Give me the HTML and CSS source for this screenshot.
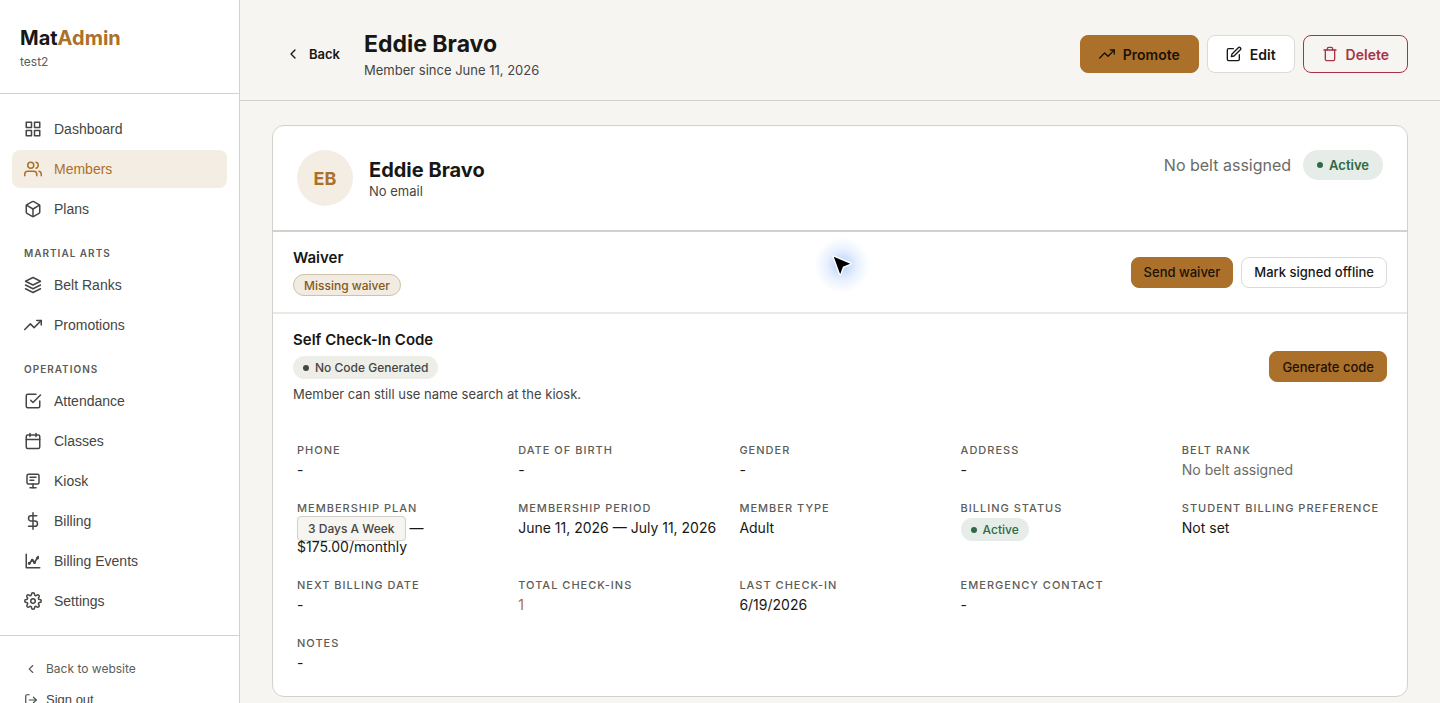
FILE: index.html
```html
<!DOCTYPE html>
<html lang="en">
<head>
    <meta charset="UTF-8">
    <meta name="viewport" content="width=device-width, initial-scale=1.0">
    <title>MatAdmin - Eddie Bravo</title>
    <link rel="stylesheet" href="styles.css">
</head>
<body>
    <div class="layout">
        <!-- Sidebar -->
        <aside class="sidebar">
            <div class="brand">
                <div class="brand-name">Mat<span>Admin</span></div>
                <div class="brand-gym">test2</div>
            </div>

            <nav class="nav">
                <a href="#" class="nav-item">
                    <svg class="icon" viewBox="0 0 24 24"><rect x="3" y="3" width="7" height="7"/><rect x="14" y="3" width="7" height="7"/><rect x="14" y="14" width="7" height="7"/><rect x="3" y="14" width="7" height="7"/></svg>
                    Dashboard
                </a>
                <a href="#" class="nav-item active">
                    <svg class="icon" viewBox="0 0 24 24"><path d="M17 21v-2a4 4 0 0 0-4-4H5a4 4 0 0 0-4 4v2"/><circle cx="9" cy="7" r="4"/><path d="M23 21v-2a4 4 0 0 0-3-3.87"/><path d="M16 3.13a4 4 0 0 1 0 7.75"/></svg>
                    Members
                </a>
                <a href="#" class="nav-item">
                    <svg class="icon" viewBox="0 0 24 24"><path d="M21 16V8a2 2 0 0 0-1-1.73l-7-4a2 2 0 0 0-2 0l-7 4A2 2 0 0 0 3 8v8a2 2 0 0 0 1 1.73l7 4a2 2 0 0 0 2 0l7-4A2 2 0 0 0 21 16z"/><path d="M3.27 6.96L12 12.01l8.73-5.05"/><path d="M12 22.08V12"/></svg>
                    Plans
                </a>

                <div class="nav-label">Martial Arts</div>
                <a href="#" class="nav-item">
                    <svg class="icon" viewBox="0 0 24 24"><path d="M12 2L2 7l10 5 10-5-10-5z"/><path d="M2 17l10 5 10-5"/><path d="M2 12l10 5 10-5"/></svg>
                    Belt Ranks
                </a>
                <a href="#" class="nav-item">
                    <svg class="icon" viewBox="0 0 24 24"><path d="M23 6l-9.5 9.5-5-5L1 18"/><path d="M17 6h6v6"/></svg>
                    Promotions
                </a>

                <div class="nav-label">Operations</div>
                <a href="#" class="nav-item">
                    <svg class="icon" viewBox="0 0 24 24"><path d="M9 11l3 3L22 4"/><path d="M21 12v7a2 2 0 0 1-2 2H5a2 2 0 0 1-2-2V5a2 2 0 0 1 2-2h11"/></svg>
                    Attendance
                </a>
                <a href="#" class="nav-item">
                    <svg class="icon" viewBox="0 0 24 24"><rect x="3" y="4" width="18" height="18" rx="2"/><path d="M16 2v4"/><path d="M8 2v4"/><path d="M3 10h18"/></svg>
                    Classes
                </a>
                <a href="#" class="nav-item">
                    <svg class="icon" viewBox="0 0 24 24"><rect x="4" y="3" width="16" height="13" rx="2"/><path d="M8 7h8"/><path d="M8 11h5"/><path d="M12 16v5"/><path d="M8 21h8"/></svg>
                    Kiosk
                </a>
                <a href="#" class="nav-item">
                    <svg class="icon" viewBox="0 0 24 24"><path d="M12 1v22"/><path d="M17 5H9.5a3.5 3.5 0 0 0 0 7h5a3.5 3.5 0 0 1 0 7H6"/></svg>
                    Billing
                </a>
                <a href="#" class="nav-item">
                    <svg class="icon" viewBox="0 0 24 24"><path d="M3 3v18h18"/><path d="M7 16l4-6 3 4 5-8"/><circle cx="7" cy="15" r="1"/><circle cx="11" cy="11" r="1"/><circle cx="14" cy="14" r="1"/><circle cx="18" cy="8" r="1"/></svg>
                    Billing Events
                </a>
                <a href="#" class="nav-item">
                    <svg class="icon" viewBox="0 0 24 24"><circle cx="12" cy="12" r="3"/><path d="M19.4 15a1.65 1.65 0 0 0 .33 1.82l.06.06a2 2 0 1 1-2.83 2.83l-.06-.06a1.65 1.65 0 0 0-2.8 1.18V21a2 2 0 0 1-4 0v-.09a1.65 1.65 0 0 0-2.9-1.18l-.06.06a2 2 0 1 1-2.83-2.83l.06-.06A1.65 1.65 0 0 0 3.09 14H3a2 2 0 0 1 0-4h.09a1.65 1.65 0 0 0 1.18-2.9l-.06-.06a2 2 0 1 1 2.83-2.83l.06.06A1.65 1.65 0 0 0 10 3.09V3a2 2 0 0 1 4 0v.09a1.65 1.65 0 0 0 2.9 1.18l.06-.06a2 2 0 1 1 2.83 2.83l-.06.06A1.65 1.65 0 0 0 20.91 10H21a2 2 0 0 1 0 4h-.09a1.65 1.65 0 0 0-1.51 1z"/></svg>
                    Settings
                </a>
            </nav>

            <div class="sidebar-footer">
                <a href="#" class="footer-link">
                    <svg class="icon icon-sm" viewBox="0 0 24 24"><path d="M15 18l-6-6 6-6"/></svg>
                    Back to website
                </a>
                <button type="button" class="footer-link sign-out">
                    <svg class="icon icon-sm" viewBox="0 0 24 24"><path d="M9 21H5a2 2 0 0 1-2-2V5a2 2 0 0 1 2-2h4"/><path d="M16 17l5-5-5-5"/><path d="M21 12H9"/></svg>
                    Sign out
                </button>
            </div>
        </aside>

        <!-- Main -->
        <main class="main">
            <header class="topbar">
                <a href="#" class="back-link">
                    <svg class="icon icon-md" viewBox="0 0 24 24"><path d="M15 18l-6-6 6-6"/></svg>
                    Back
                </a>
                <div class="page-title">
                    <h1>Eddie Bravo</h1>
                    <p>Member since June 11, 2026</p>
                </div>
                <div class="actions">
                    <button type="button" class="btn btn-primary">
                        <svg class="icon icon-md" viewBox="0 0 24 24"><path d="M23 6l-9.5 9.5-5-5L1 18"/><path d="M17 6h6v6"/></svg>
                        Promote
                    </button>
                    <button type="button" class="btn">
                        <svg class="icon icon-md" viewBox="0 0 24 24"><path d="M11 4H4a2 2 0 0 0-2 2v14a2 2 0 0 0 2 2h14a2 2 0 0 0 2-2v-7"/><path d="M18.5 2.5a2.12 2.12 0 0 1 3 3L12 15l-4 1 1-4 9.5-9.5z"/></svg>
                        Edit
                    </button>
                    <button type="button" class="btn btn-danger">
                        <svg class="icon icon-md" viewBox="0 0 24 24"><path d="M3 6h18"/><path d="M19 6v14a2 2 0 0 1-2 2H7a2 2 0 0 1-2-2V6m3 0V4a2 2 0 0 1 2-2h4a2 2 0 0 1 2 2v2"/></svg>
                        Delete
                    </button>
                </div>
            </header>

            <div class="content">
                <section class="card">
                    <div class="profile">
                        <div class="avatar">EB</div>
                        <div class="profile-info">
                            <h2>Eddie Bravo</h2>
                            <p>No email</p>
                        </div>
                        <div class="profile-status">
                            <span class="no-belt">No belt assigned</span>
                            <span class="badge badge-lg badge-green"><i class="dot"></i>Active</span>
                        </div>
                    </div>

                    <div class="panel panel-line">
                        <div>
                            <h3>Waiver</h3>
                            <span class="badge badge-warning">Missing waiver</span>
                        </div>
                        <div class="panel-actions">
                            <button type="button" class="btn btn-sm btn-primary">Send waiver</button>
                            <button type="button" class="btn btn-sm">Mark signed offline</button>
                        </div>
                    </div>

                    <div class="panel">
                        <div>
                            <h3>Self Check-In Code</h3>
                            <span class="badge badge-gray"><i class="dot"></i>No Code Generated</span>
                            <p class="hint">Member can still use name search at the kiosk.</p>
                        </div>
                        <div class="panel-actions">
                            <button type="button" class="btn btn-sm btn-primary">Generate code</button>
                        </div>
                    </div>

                    <dl class="details">
                        <div><dt>Phone</dt><dd>-</dd></div>
                        <div><dt>Date of Birth</dt><dd>-</dd></div>
                        <div><dt>Gender</dt><dd>-</dd></div>
                        <div><dt>Address</dt><dd>-</dd></div>
                        <div><dt>Belt Rank</dt><dd class="muted">No belt assigned</dd></div>
                        <div><dt>Membership Plan</dt><dd><span class="plan-tag">3 Days A Week</span> — <br>$175.00/monthly</dd></div>
                        <div><dt>Membership Period</dt><dd>June 11, 2026 — July 11, 2026</dd></div>
                        <div><dt>Member Type</dt><dd>Adult</dd></div>
                        <div><dt>Billing Status</dt><dd><span class="badge badge-green"><i class="dot"></i>Active</span></dd></div>
                        <div><dt>Student Billing Preference</dt><dd>Not set</dd></div>
                        <div><dt>Next Billing Date</dt><dd>-</dd></div>
                        <div><dt>Total Check-Ins</dt><dd><a href="#">1</a></dd></div>
                        <div><dt>Last Check-In</dt><dd>6/19/2026</dd></div>
                        <div><dt>Emergency Contact</dt><dd>-</dd></div>
                        <div class="full"><dt>Notes</dt><dd>-</dd></div>
                    </dl>
                </section>
            </div>
        </main>
    </div>

    <!-- Pointer -->
    <div class="pointer">
        <svg viewBox="0 0 24 24"><path d="M3 3l18 7.5-8 3.5-3 8z"/></svg>
    </div>
</body>
</html>
```
FILE: styles.css
```css
* {
    box-sizing: border-box;
}
body {
    font-family: Inter, "Liberation Sans", sans-serif;
    font-size: 14px;
    color: #171715;
    background-color: #f6f5f1;
    margin: 0;
}
h1, h2, h3, p, dl, dd {
    margin: 0;
}
a {
    color: inherit;
    text-decoration: none;
}
.layout {
    display: flex;
    height: 100vh;
}
.icon {
    width: 18px;
    height: 18px;
    flex-shrink: 0;
    fill: none;
    stroke: currentColor;
    stroke-width: 2;
    stroke-linecap: round;
    stroke-linejoin: round;
}
.icon-md {
    width: 16px;
    height: 16px;
}
.icon-sm {
    width: 14px;
    height: 14px;
}

/* Sidebar */
.sidebar {
    width: 240px;
    flex-shrink: 0;
    background-color: #fff;
    border-right: 1px solid #d2d1cb;
    overflow-y: auto;
    scrollbar-width: none;
}
.brand {
    padding: 24px 20px 21px;
    border-bottom: 1px solid #d2d1cb;
}
.brand-name {
    font-size: 20px;
    font-weight: 700;
    line-height: 28px;
}
.brand-name span {
    color: #ab7029;
}
.brand-gym {
    font-size: 12px;
    line-height: 20px;
    color: #5c5c58;
}
.nav {
    display: flex;
    flex-direction: column;
    gap: 2px;
    padding: 16px 12px 15px;
    border-bottom: 1px solid #d2d1cb;
}
.nav-item {
    display: flex;
    align-items: center;
    gap: 12px;
    height: 38px;
    padding: 0 12px;
    border-radius: 8px;
    font-family: "Liberation Sans", sans-serif;
    color: #454542;
}
.nav-item.active {
    background-color: #f4ede4;
    color: #ab7029;
}
.nav-label {
    height: 34px;
    padding: 15px 12px 0;
    font-size: 10px;
    font-weight: 600;
    line-height: 16px;
    letter-spacing: 1px;
    text-transform: uppercase;
    color: #5c5c58;
}
.sidebar-footer {
    padding: 17px 12px;
}
.footer-link {
    display: flex;
    align-items: center;
    gap: 8px;
    height: 31px;
    padding: 0 12px;
    font-size: 12px;
    color: #5c5c58;
}
.sign-out {
    border: none;
    background: none;
    font-family: "Liberation Sans", sans-serif;
    font-size: 13px;
    color: #454542;
    cursor: pointer;
}

/* Top bar */
.main {
    flex: 1;
    min-width: 0;
    overflow-y: auto;
    scrollbar-width: none;
}
.topbar {
    display: flex;
    align-items: center;
    gap: 12px;
    padding: 28px 32px 20px;
    border-bottom: 1px solid #d2d1cb;
}
.back-link {
    display: flex;
    align-items: center;
    gap: 8px;
    padding: 0 12px 0 13px;
    font-size: 13px;
    font-weight: 600;
}
.page-title h1 {
    font-size: 23px;
    font-weight: 700;
    line-height: 32px;
}
.page-title p {
    font-size: 13px;
    line-height: 20px;
    color: #454542;
}
.actions {
    display: flex;
    gap: 8px;
    margin-left: auto;
}
.btn {
    display: inline-flex;
    align-items: center;
    gap: 8px;
    height: 38px;
    padding: 0 18px;
    border: 1px solid #dbdad4;
    border-radius: 8px;
    background-color: #fff;
    color: #171715;
    font-family: inherit;
    font-size: 14px;
    font-weight: 600;
    cursor: pointer;
}
.btn-primary {
    background-color: #ab7029;
    border-color: #ab7029;
    color: #1c1208;
}
.btn-danger {
    background-color: transparent;
    border-color: #a63446;
    color: #a63446;
}
.btn-sm {
    height: 31px;
    padding: 0 12px;
    font-size: 13px;
    font-weight: 500;
}

/* Member card */
.content {
    padding: 24px 32px;
}
.card {
    background-color: #fff;
    border: 1px solid #d2d1cb;
    border-radius: 12px;
}
.profile {
    display: flex;
    gap: 16px;
    padding: 24px;
    border-bottom: 2px solid #d2d1cb;
}
.avatar {
    display: flex;
    align-items: center;
    justify-content: center;
    width: 56px;
    height: 56px;
    border-radius: 50%;
    background-color: #f4ede4;
    color: #ab7029;
    font-size: 18px;
    font-weight: 700;
}
.profile-info {
    padding-top: 8px;
}
.profile-info h2 {
    font-size: 20px;
    font-weight: 700;
    line-height: 24px;
}
.profile-info p {
    font-size: 13px;
    line-height: 18px;
    color: #454542;
}
.profile-status {
    display: flex;
    align-items: center;
    gap: 12px;
    height: 30px;
    margin-left: auto;
}
.no-belt {
    font-size: 16px;
    color: #6b6b66;
}
.badge {
    display: inline-flex;
    align-items: center;
    gap: 6px;
    height: 23px;
    padding: 0 10px;
    border-radius: 20px;
    font-size: 12px;
    font-weight: 500;
}
.badge-lg {
    height: 30px;
    padding: 0 14px;
    font-size: 13px;
    font-weight: 600;
}
.badge-green {
    background-color: #e6ece7;
    color: #2d6a45;
}
.badge-gray {
    background-color: #eeeee9;
    color: #454542;
}
.badge-warning {
    height: 22px;
    background-color: #f1ebe1;
    border: 1px solid #cfc2a9;
    color: #87591b;
}
.dot {
    width: 6px;
    height: 6px;
    border-radius: 50%;
    background-color: currentColor;
}
.panel {
    display: flex;
    align-items: center;
    justify-content: space-between;
    padding: 16px 20px;
}
.panel-line {
    border-bottom: 2px solid #e9e9e5;
}
.panel h3 {
    font-size: 15px;
    font-weight: 600;
    line-height: 20px;
    margin-bottom: 6px;
}
.panel .badge {
    display: flex;
    width: fit-content;
}
.panel-actions {
    display: flex;
    gap: 8px;
}
.hint {
    margin-top: 6px;
    font-size: 13px;
    line-height: 18px;
    color: #454542;
}

/* Details */
.details {
    display: grid;
    grid-template-columns: repeat(5, minmax(0, 1fr));
    gap: 20px;
    padding: 22px 24px 24px;
}
.details .full {
    grid-column: 1 / -1;
}
.details dt {
    font-size: 11px;
    font-weight: 500;
    line-height: 18px;
    letter-spacing: 1px;
    text-transform: uppercase;
    white-space: nowrap;
    color: #5c5c58;
    margin-bottom: 1px;
}
.details dd {
    font-size: 14px;
    line-height: 19px;
}
.details dd a {
    color: #ab7029;
}
.details .muted {
    color: #6b6b66;
}
.details .badge {
    display: flex;
    width: fit-content;
}
.plan-tag {
    padding: 4px 10px;
    border: 1px solid #d2d1cb;
    border-radius: 4px;
    background-color: #f6f5f1;
    color: #454542;
    font-size: 12px;
    font-weight: 500;
    line-height: 16px;
}

/* Pointer with its glow, floats over the page */
.pointer {
    position: absolute;
    left: 809px;
    top: 232px;
    padding: 22px;
    border-radius: 50%;
    background-image: radial-gradient(circle, rgba(90, 150, 245, 0.45) 0, rgba(120, 170, 250, 0.15) 35%, rgba(120, 170, 250, 0) 60%);
    pointer-events: none;
}
.pointer svg {
    display: block;
    width: 22px;
    height: 22px;
    fill: #000;
    stroke: #fff;
    stroke-width: 3;
    stroke-linejoin: round;
    paint-order: stroke;
}
```
